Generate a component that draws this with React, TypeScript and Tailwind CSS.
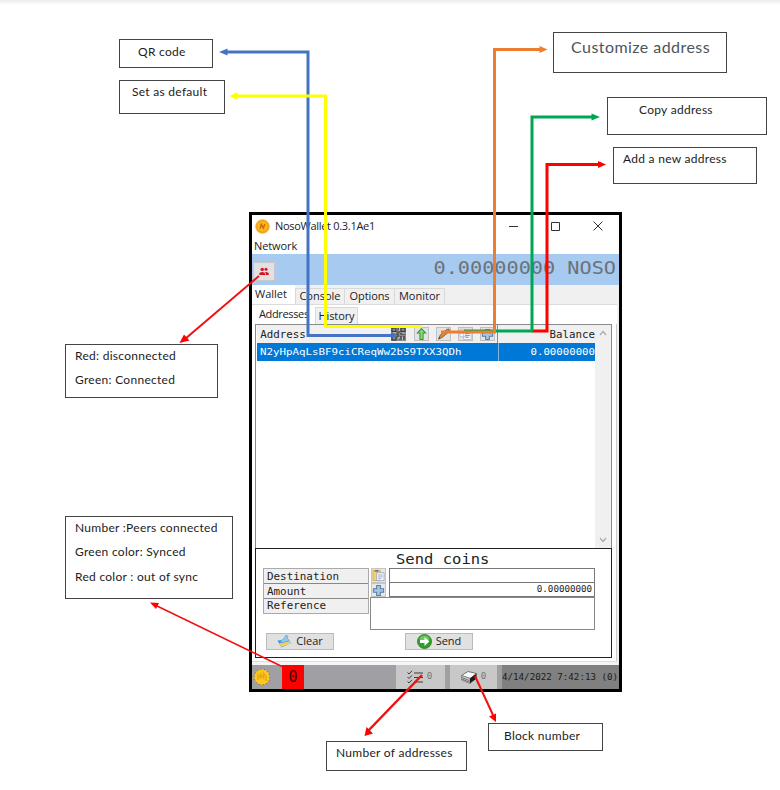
import type { ReactNode } from 'react';

const sans = "font-['Open_Sans',sans-serif]";
const mono = "font-['DejaVu_Sans_Mono',monospace]";

function Note({ className, text = 'text-[12px] tracking-[0.28px] text-[#1c1c1c]', children }: { className: string; text?: string; children: ReactNode }) {
  return (
    <div
      className={`absolute border border-[#444] bg-white font-['Lato',sans-serif] leading-[14px] whitespace-nowrap ${text} ${className}`}
    >
      {children}
    </div>
  );
}

function Coin() {
  return (
    <svg viewBox="0 0 18 18" className="h-full w-full">
      <circle cx="9" cy="9" r="8.2" fill="#f5a11b" stroke="#efb429" strokeWidth="1" />
      <circle cx="9" cy="9" r="6" fill="#fbb91f" />
      <path d="M6 11.5L7.5 6.5L10 11L11.8 6" fill="none" stroke="#cf650b" strokeWidth="1.7" />
    </svg>
  );
}

function GoldBadge() {
  return (
    <svg viewBox="0 0 18 18" className="h-[18px] w-[18px]">
      <circle cx="9" cy="9" r="7.8" fill="#f6b51c" stroke="#6b5521" strokeWidth="1" strokeDasharray="1 2.5" />
      <circle cx="9" cy="9" r="7.4" fill="#fcc820" />
      <path d="M5 12V7l2.5 3V6l3 4V5l2.500 4v4" fill="none" stroke="#eda81a" strokeWidth="1.5" />
    </svg>
  );
}

function People() {
  return (
    <svg viewBox="0 0 10 9" className="h-[9px] w-[10px]" fill="#e01020">
      <circle cx="3.2" cy="2.4" r="1.7" />
      <circle cx="7" cy="2.2" r="1.5" />
      <path d="M0.300 8V6.600Q0.500 5 3.200 5T6 6.600V8zM6.700 8V6.300L6 5Q9.500 4.600 9.800 6.500V8z" />
    </svg>
  );
}

function QrIcon() {
  return (
    <svg viewBox="0 0 15 14" className="h-[14px] w-[15px]">
      <rect width="15" height="14" fill="#8a8a8a" />
      <g fill="none" stroke="#363636" strokeWidth="1.1">
        <rect x="1" y="1" width="4" height="3.500" />
        <rect x="10" y="1" width="4" height="3.500" />
        <rect x="1" y="9.500" width="4" height="3.500" />
        <path d="M7 0V3M6 5H9M0 7H4M5 7H7V10M9 7H14M8 12H11M10 9V11M13 9V13" />
      </g>
      <path d="M5.500 2H6.500M8.500 1V4M2 5.800H5M11 6H14M7 11H9M11.500 10V13" stroke="#c8c8c8" strokeWidth="1" />
    </svg>
  );
}

function UpIcon() {
  return (
    <svg viewBox="0 0 14 14" className="h-[14px] w-[14px]">
      <path d="M7 1.200L11.500 6H8.700V13H5.300V6H2.500Z" fill="#82dc72" stroke="#35963a" strokeWidth="1.1" />
    </svg>
  );
}

function PencilIcon() {
  return (
    <svg viewBox="0 0 14 14" className="h-[14px] w-[14px]">
      <path d="M1.500 12.500L3.500 8L10.500 2L13 1.500L13.500 4L6 10.500Z" fill="#d58a39" stroke="#6d513b" strokeWidth="0.8" />
      <path d="M1.500 12.500L2.500 10.500L4 11.500Z" fill="#333" />
    </svg>
  );
}

function ListIcon() {
  return (
    <svg viewBox="0 0 14 14" className="h-[14px] w-[14px]">
      <path d="M1 2H7V10H1zM5 4H13V13H5z" fill="#f9fbff" stroke="#a9b4cc" strokeWidth="0.8" />
      <path d="M2 4H5M2 6H4M7 6.500H11.500M7 8.500H11.500M7 10.500H10.500" stroke="#6680b8" strokeWidth="1" />
    </svg>
  );
}

function PlusIcon() {
  return (
    <svg viewBox="0 0 14 14" className="h-[13px] w-[14px]">
      <path d="M5 1.500H9V5H12.500V9H9V12.500H5V9H1.500V5H5Z" fill="#a5c7e6" stroke="#5c7da0" strokeWidth="1.1" />
    </svg>
  );
}

function PasteIcon() {
  return (
    <svg viewBox="0 0 14 14" className="h-[13px] w-[14px]">
      <path d="M1 1.500H9V12.500H1z" fill="#f4d45e" stroke="#caa844" strokeWidth="0.8" />
      <path d="M3 1H7V3H3z" fill="#777" />
      <path d="M5 4H13V12.500H5z" fill="#f7faff" stroke="#8b9fc0" strokeWidth="0.8" />
      <path d="M6.500 6.500H11.500M6.500 8.500H11.500M6.500 10.500H10" stroke="#7893bd" strokeWidth="0.8" />
    </svg>
  );
}

function BroomIcon() {
  return (
    <svg viewBox="0 0 15 13" className="h-[13px] w-[15px]">
      <path d="M0.500 5.500L11 4.500L14 8L4.500 12.500Z" fill="#3f95d6" />
      <path d="M2 8.500L12.500 6L13.500 8.500L4.500 12Z" fill="#f1cf62" />
      <path d="M3.500 6L7 3.500L8.500 0.500L10.800 0.800L10.500 3.500L12.500 5.500L5 8Z" fill="#8cc9f1" stroke="#5f9dca" strokeWidth="0.600" />
    </svg>
  );
}

function GoIcon() {
  return (
    <svg viewBox="0 0 15 15" className="h-[15px] w-[15px]">
      <circle cx="7.500" cy="7.500" r="7" fill="#2e9f2c" stroke="#247c24" strokeWidth="0.8" />
      <ellipse cx="7.500" cy="5" rx="5" ry="3.500" fill="#6cc85c" />
      <path d="M3 6H7.500V3L12.300 7.500L7.500 12V9H3Z" fill="#fff" />
    </svg>
  );
}

function ChecklistIcon() {
  return (
    <svg viewBox="0 0 17 14" className="h-[14px] w-[17px]" fill="none" stroke="#3c3c3c">
      <path d="M0.500 2.500L2 4L5 0.800M0.500 7L2 8.500L5 5.300M0.500 11.500L2 13L5 9.800" strokeWidth="1" />
      <path d="M7 3H16M7 7.500H16M7 12H16" strokeWidth="1.1" />
    </svg>
  );
}

function BlockIcon() {
  return (
    <svg viewBox="0 0 16 13" className="h-[13px] w-[16px]">
      <path d="M0.500 4.500L7 0.500L15.500 2.500L9 7.500Z" fill="#fbfbfb" stroke="#555" strokeWidth="0.8" />
      <path d="M0.500 4.500L9 7.500V12.500L0.500 9Z" fill="#d9d9d9" stroke="#777" strokeWidth="0.8" />
      <path d="M9 7.500L15.500 2.500V7.500L9 12.500Z" fill="#1e1e1e" />
      <path d="M1 6.500L8.500 9.600M1 8L8.500 11.200" stroke="#444" strokeWidth="0.7" />
    </svg>
  );
}

function TitleBar() {
  return (
    <div className="flex h-[23px] items-center pl-[3px] text-[11px] text-[#222]">
      <div className="h-[15px] w-[15px]"><Coin /></div>
      <span className="ml-[5px] w-[240px] tracking-[-0.3px]">NosoWallet 0.3.1Ae1</span>
      <svg viewBox="0 0 98 12" className="-mt-[2px] -ml-[7px] h-[12px] w-[98px]" fill="none" stroke="#333" strokeWidth="1">
        <path d="M1 6.500H10M43.500 2.500H51.500V10.500H43.500ZM85.500 1.500L94.500 10.500M94.500 1.500L85.500 10.500" />
      </svg>
    </div>
  );
}

function Tab({ className, children }: { className: string; children: ReactNode }) {
  return (
    <div className={`flex h-[16px] items-center justify-center border border-b-0 border-[#d9d9d9] bg-[#f0f0f0] ${className}`}>
      {children}
    </div>
  );
}

function Tool({ className, children }: { className: string; children: ReactNode }) {
  return (
    <div className={`flex h-[14px] w-[15px] items-center justify-center border border-[#c0c0c0] bg-[#e3e3e3] ${className}`}>
      {children}
    </div>
  );
}

function AddressTable() {
  return (
    <div className={`flex h-[224px] w-[357px] border border-b-0 border-[#8a8a8a] bg-white ${mono}`}>
      <div className="ml-px w-[338px]">
        <div className="flex h-[18px] items-center bg-[#f0f0f0] text-[10px] text-[#222]">
          <span className="w-[134px] origin-left scale-x-[1.08] pl-[3px]">Address</span>
          <QrIcon />
          <Tool className="ml-[8px]"><UpIcon /></Tool>
          <Tool className="ml-[7px]"><PencilIcon /></Tool>
          <Tool className="ml-[7px]"><ListIcon /></Tool>
          <Tool className="ml-[7px]"><PlusIcon /></Tool>
          <div className="ml-[2px] h-full w-px bg-[#888]" />
          <span className="flex-1 origin-right scale-x-[1.08] text-right">Balance</span>
        </div>
        <div className="flex h-[18px] items-center bg-[#0078d7] text-[9px] text-white">
          <div className="w-[241px] pt-px pl-[3px]"><span className="inline-block origin-left scale-x-[1.2]">N2yHpAqLsBF9ciCReqWw2bS9TXX3QDh</span></div>
          <div className="h-full w-px bg-[#86b5dd]" />
          <span className="flex-1 origin-right scale-x-[1.19] pt-px text-right">0.00000000</span>
        </div>
      </div>
      <div className="flex w-[16px] flex-col items-center justify-between bg-[#f0f0f0] py-[5px]">
        <svg viewBox="0 0 8 6" className="h-[6px] w-[8px]"><path d="M1 5L4 1.500L7 5" fill="none" stroke="#aaa" strokeWidth="1.2" /></svg>
        <svg viewBox="0 0 8 6" className="h-[6px] w-[8px]"><path d="M1 1L4 4.500L7 1" fill="none" stroke="#aaa" strokeWidth="1.2" /></svg>
      </div>
    </div>
  );
}

function SendPanel() {
  return (
    <div className={`h-[110px] w-[357px] border border-[#222] bg-white ${mono} text-[#222]`}>
      <div className="h-[19px] pl-[140px] text-[14.5px] leading-[21px]"><span className="inline-block origin-left scale-x-[1.07]">Send coins</span></div>
      <div className="flex pl-[7px]">
        <div className="h-[46px] w-[106px] border border-[#aaa] bg-[#f0f0f0] text-[10px] leading-[16px]">
          <div className="h-[15px] border-b border-[#888] pl-[3px]"><span className="inline-block origin-left scale-x-[1.09]">Destination</span></div>
          <div className="h-[15px] border-b border-[#888] pl-[3px]"><span className="inline-block origin-left scale-x-[1.09]">Amount</span></div>
          <div className="h-[14px] pl-[3px] leading-[14px]"><span className="inline-block origin-left scale-x-[1.09]">Reference</span></div>
        </div>
        <div className="ml-px w-[225px]">
          <div className="flex">
            <div className="mr-[3px] ml-px w-[15px]">
              <div className="flex h-[15px] items-center justify-center border border-[#c5c5c5] bg-[#e8e8e8]"><PasteIcon /></div>
              <div className="flex h-[14px] items-center justify-center border border-[#c5c5c5] bg-[#e8e8e8]"><PlusIcon /></div>
            </div>
            <div className="flex-1">
              <div className="h-[15px] border border-[#777]" />
              <div className="h-[14px] border border-t-0 border-[#777] pr-[2px] text-right text-[8px] leading-[14px]"><span className="inline-block origin-right scale-x-[1.15]">0.00000000</span></div>
            </div>
          </div>
          <div className="h-[33px] border border-[#888]" />
        </div>
      </div>
      <div className={`mt-[3px] flex pl-[10px] text-[11px] ${sans}`}>
        <div className="flex h-[17px] w-[68px] items-center justify-center gap-[4px] border border-[#bbb] bg-[#e1e1e1]"><BroomIcon /><span>Clear</span></div>
        <div className="ml-[71px] flex h-[17px] w-[68px] items-center justify-center gap-[4px] border border-[#bbb] bg-[#e1e1e1]"><GoIcon /><span>Send</span></div>
      </div>
    </div>
  );
}

function StatusBar() {
  return (
    <div className={`flex h-[24px] items-center bg-[#a0a0a4] ${mono}`}>
      <div className="w-[30px] pl-px"><GoldBadge /></div>
      <div className="flex h-full w-[22px] items-center justify-center bg-[#ff0000] text-[15px] text-[#400000]">0</div>
      <div className="ml-[92px] flex h-full w-[49px] items-center bg-[#c8c8c8] pl-[11px] text-[8px] text-[#777]"><ChecklistIcon /><span className="ml-[3px] scale-x-[1.15]">0</span></div>
      <div className="ml-[5px] flex h-full w-[47px] items-center bg-[#c8c8c8] pl-[11px] text-[8px] text-[#777]"><BlockIcon /><span className="ml-[4px] scale-x-[1.15]">0</span></div>
      <div className="ml-[5px] flex h-full flex-1 items-center bg-[#808080] text-[8.5px] whitespace-nowrap text-[#1c1c1c]"><span className="origin-left scale-x-[1.08]">4/14/2022 7:42:13 (0)</span></div>
    </div>
  );
}

function WalletWindow() {
  return (
    <div className={`absolute top-[212px] left-[249px] h-[480px] w-[373px] border-[3px] border-black bg-[#f0f0f0] whitespace-nowrap ${sans}`}>
      <div className="h-[39px] bg-white">
        <TitleBar />
        <div className="pl-[2px] text-[11px] leading-[16px] tracking-[-0.1px] text-[#222]">Network</div>
      </div>
      <div className="flex h-[31px] items-center justify-between bg-[#a6caf0]">
        <div className="mt-[4px] ml-[1px] flex h-[19px] w-[22px] items-center justify-center border border-[#c8c8c8] bg-[#e1e1e1]"><People /></div>
        <span className={`mr-[3px] mb-[4px] origin-right scale-x-[1.155] text-[17.5px] leading-[20px] text-[#6c7278] ${mono}`}>0.00000000 NOSO</span>
      </div>
      <div className="flex h-[19px] items-end text-[11px] text-[#222]">
        <div className="flex h-full w-[43px] items-center bg-white pl-[3px]">Wallet</div>
        <Tab className="w-[50px]">Console</Tab>
        <Tab className="w-[50px] border-l-0 tracking-[-0.1px]">Options</Tab>
        <Tab className="w-[50px] border-l-0">Monitor</Tab>
      </div>
      <div className="mr-[2px] h-[361px] bg-white">
        <div className="flex h-[20px] items-end border-t border-[#dcdcdc] text-[11px] text-[#222]">
          <div className="flex h-full w-[63px] items-center pl-[7px] tracking-[-0.35px]">Addresses</div>
          <Tab className="h-[17px] w-[43px] tracking-[-0.1px]">History</Tab>
          <div className="flex-1" />
        </div>
        <div className="h-[337px] border-r border-[#ccc] pl-[3px]">
          <AddressTable />
          <SendPanel />
        </div>
        <div className="h-[4px] border-t border-[#ddd] bg-[#f5f5f5]" />
      </div>
      <StatusBar />
    </div>
  );
}

function Arrows() {
  return (
    <svg viewBox="0 0 780 790" className="absolute inset-0 h-[790px] w-[780px]" fill="none" strokeWidth="3">
      <path d="M532 331H547V164.500H599" stroke="#ff0000" />
      <path d="M598 161L606 164.500L598 168Z" fill="#ff0000" />
      <path d="M464 331H532V117H593" stroke="#00a651" />
      <path d="M591.500 113.500L600 117L591.500 120.500Z" fill="#00a651" />
      <path d="M441 332H494.500V49.500H541" stroke="#ed7d31" />
      <path d="M539.500 46L547.500 49.500L539.500 53Z" fill="#ed7d31" />
      <path d="M396 335.500H308V52H226" stroke="#4472c4" />
      <path d="M227.500 48.500L219 52L227.500 55.500Z" fill="#4472c4" />
      <path d="M422 326.500H325.500V96H236" stroke="#ffff00" />
      <path d="M237.500 92L229.500 96L237.500 100Z" fill="#ffff00" />
      <path d="M259 276L185 339" stroke="#f01010" strokeWidth="2" />
      <path d="M179.500 343L184 334.500L189.500 340.500Z" fill="#ff0000" />
      <path d="M283 667L155 605" stroke="#f01010" strokeWidth="1.5" />
      <path d="M150 602.500L159 603L156 609Z" fill="#ff0000" />
      <path d="M422 675L368 731" stroke="#f01010" strokeWidth="2.500" />
      <path d="M364.500 736L366.500 727L373 733.500Z" fill="#ff0000" />
      <path d="M475 676L493 715" stroke="#f01010" strokeWidth="2" />
      <path d="M496 722L489 716.500L496 713.500Z" fill="#ff0000" />
    </svg>
  );
}

export default function App() {
  return (
    <main className="relative h-[790px] w-[780px] overflow-hidden bg-white">
      <div className="h-[5px] bg-linear-to-b from-[#ebebeb] to-white" />
      <WalletWindow />
      <Note className="top-[39px] left-[119px] h-[29px] w-[94px] pt-[5px] pl-[18px]">QR code</Note>
      <Note className="top-[80px] left-[119px] h-[34px] w-[106px] pt-[4px] pl-[12px]">Set as default</Note>
      <Note text="text-[16px] tracking-[0.45px] text-[#4b555e]" className="top-[32px] left-[553px] h-[41px] w-[174px] pt-[7px] pl-[17px]">Customize address</Note>
      <Note className="top-[97px] left-[607px] h-[38px] w-[160px] pt-[5px] pl-[31px]">Copy address</Note>
      <Note className="top-[147px] left-[613px] h-[37px] w-[144px] pt-[4px] pl-[9px]">Add a new address</Note>
      <Note className="top-[344px] left-[65px] h-[54px] w-[153px] pt-[4px] pl-[9px]">
        <p>Red: disconnected</p>
        <p className="mt-[10px]">Green: Connected</p>
      </Note>
      <Note className="top-[516px] left-[65px] h-[83px] w-[168px] pt-[4px] pl-[9px]">
        <p>Number :Peers connected</p>
        <p className="mt-[10px]">Green color: Synced</p>
        <p className="mt-[11px]">Red color : out of sync</p>
      </Note>
      <Note className="top-[741px] left-[326px] h-[30px] w-[141px] pt-[4px] pl-[9px]">Number of addresses</Note>
      <Note className="top-[723px] left-[488px] h-[28px] w-[115px] pt-[5px] pl-[15px]">Block number</Note>
      <Arrows />
    </main>
  );
}
